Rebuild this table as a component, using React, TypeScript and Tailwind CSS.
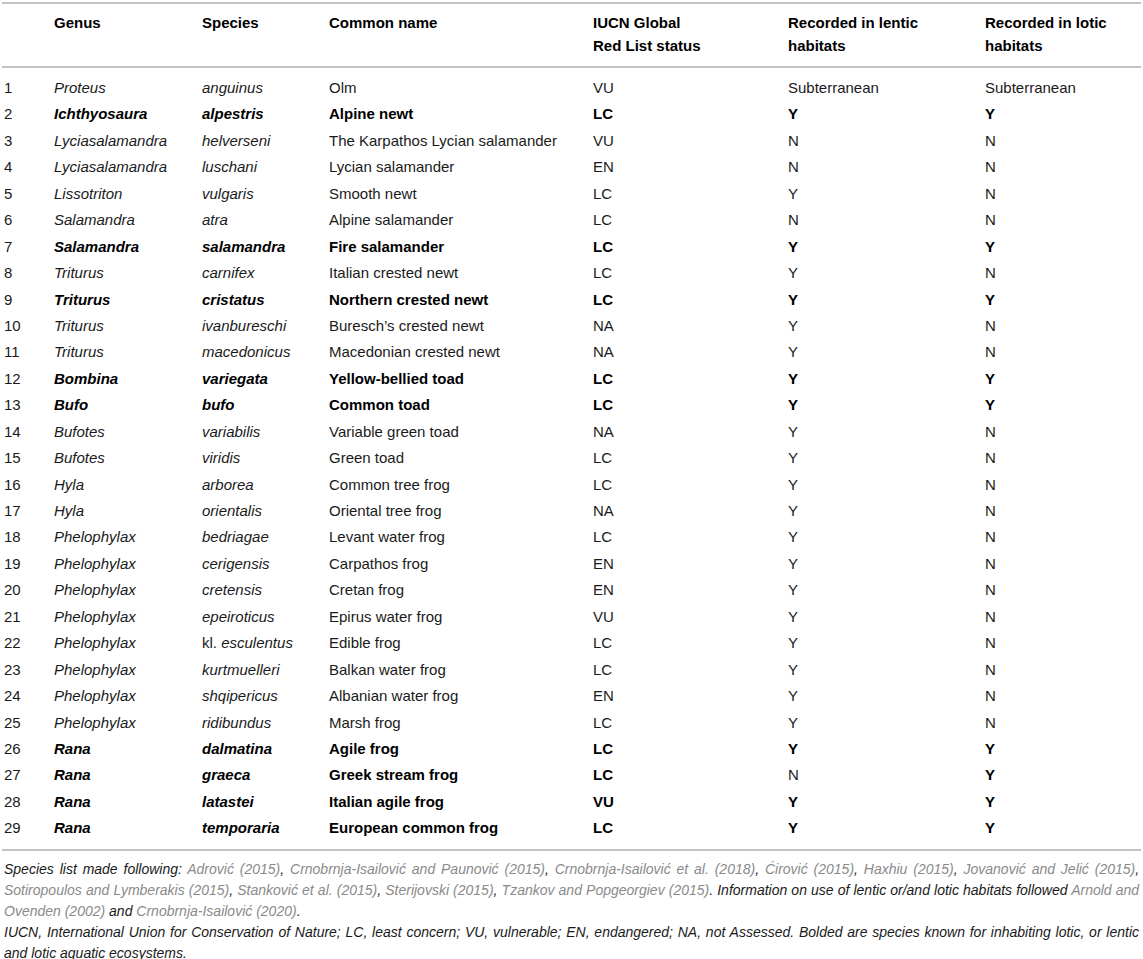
import React from "react";

type Row = [string, string, string, string, string, string, boolean, boolean?, boolean?];

const rows: Row[] = [
  ["Proteus", "anguinus", "Olm", "VU", "Subterranean", "Subterranean", false],
  ["Ichthyosaura", "alpestris", "Alpine newt", "LC", "Y", "Y", true],
  ["Lyciasalamandra", "helverseni", "The Karpathos Lycian salamander", "VU", "N", "N", false],
  ["Lyciasalamandra", "luschani", "Lycian salamander", "EN", "N", "N", false],
  ["Lissotriton", "vulgaris", "Smooth newt", "LC", "Y", "N", false],
  ["Salamandra", "atra", "Alpine salamander", "LC", "N", "N", false],
  ["Salamandra", "salamandra", "Fire salamander", "LC", "Y", "Y", true],
  ["Triturus", "carnifex", "Italian crested newt", "LC", "Y", "N", false],
  ["Triturus", "cristatus", "Northern crested newt", "LC", "Y", "Y", true],
  ["Triturus", "ivanbureschi", "Buresch\u2019s crested newt", "NA", "Y", "N", false],
  ["Triturus", "macedonicus", "Macedonian crested newt", "NA", "Y", "N", false],
  ["Bombina", "variegata", "Yellow-bellied toad", "LC", "Y", "Y", true],
  ["Bufo", "bufo", "Common toad", "LC", "Y", "Y", true],
  ["Bufotes", "variabilis", "Variable green toad", "NA", "Y", "N", false],
  ["Bufotes", "viridis", "Green toad", "LC", "Y", "N", false],
  ["Hyla", "arborea", "Common tree frog", "LC", "Y", "N", false],
  ["Hyla", "orientalis", "Oriental tree frog", "NA", "Y", "N", false],
  ["Phelophylax", "bedriagae", "Levant water frog", "LC", "Y", "N", false],
  ["Phelophylax", "cerigensis", "Carpathos frog", "EN", "Y", "N", false],
  ["Phelophylax", "cretensis", "Cretan frog", "EN", "Y", "N", false],
  ["Phelophylax", "epeiroticus", "Epirus water frog", "VU", "Y", "N", false],
  ["Phelophylax", "kl. esculentus", "Edible frog", "LC", "Y", "N", false],
  ["Phelophylax", "kurtmuelleri", "Balkan water frog", "LC", "Y", "N", false],
  ["Phelophylax", "shqipericus", "Albanian water frog", "EN", "Y", "N", false],
  ["Phelophylax", "ridibundus", "Marsh frog", "LC", "Y", "N", false],
  ["Rana", "dalmatina", "Agile frog", "LC", "Y", "Y", true],
  ["Rana", "graeca", "Greek stream frog", "LC", "N", "Y", true, false, true],
  ["Rana", "latastei", "Italian agile frog", "VU", "Y", "Y", true],
  ["Rana", "temporaria", "European common frog", "LC", "Y", "Y", true],
];

const grid = "grid grid-cols-[50px_148px_127px_264px_195px_197px_1fr]";

function Species({ text }: { text: string }) {
  if (text.startsWith("kl. ")) {
    return (
      <>
        <span className="not-italic">kl.</span> <span>{text.slice(4)}</span>
      </>
    );
  }
  return <>{text}</>;
}

function Cite({ children }: { children: React.ReactNode }) {
  return <span className="text-[#8a8a8a]">{children}</span>;
}

export default function App() {
  return (
    <div
      className="w-[1143px] h-[959px] bg-white overflow-hidden"
      style={{ fontFamily: '"Liberation Sans", Arial, sans-serif' }}
    >
      <div className="mx-[2px] pt-[2px]">
        <div className="h-[2px] bg-[#c2c2c2]" />
        <div className={`${grid} text-[15px] leading-[23px] font-bold text-black pt-[7px] pb-[9px]`}>
          <div className="pl-[2px]"></div>
          <div className="pl-[2px]">Genus</div>
          <div className="pl-[2px]">Species</div>
          <div className="pl-[2px]">Common name</div>
          <div className="pl-[2px]">
            IUCN Global
            <br />
            Red List status
          </div>
          <div className="pl-[2px]">
            Recorded in lentic
            <br />
            habitats
          </div>
          <div className="pl-[2px]">
            Recorded in lotic
            <br />
            habitats
          </div>
        </div>
        <div className="h-[2px] bg-[#c2c2c2]" />
        <div className="pt-[7px] pb-[7px] text-[15px] leading-[26.43px] text-[#1a1a1a]">
          {rows.map((r, i) => {
            const b = r[6];
            const lentB = r[7] === undefined ? b : r[7];
            const lotB = r[8] === undefined ? b : r[8];
            const bc = b ? "font-bold text-black" : "";
            return (
              <div key={i} className={grid}>
                <div className="pl-[2px]">{i + 1}</div>
                <div className={`pl-[2px] italic ${bc}`}>{r[0]}</div>
                <div className={`pl-[2px] italic ${bc}`}>
                  <Species text={r[1]} />
                </div>
                <div className={`pl-[2px] ${bc}`}>{r[2]}</div>
                <div className={`pl-[2px] ${bc}`}>{r[3]}</div>
                <div className={`pl-[2px] ${lentB ? "font-bold text-black" : ""}`}>{r[4]}</div>
                <div className={`pl-[2px] ${lotB ? "font-bold text-black" : ""}`}>{r[5]}</div>
              </div>
            );
          })}
        </div>
        <div className="h-[2px] bg-[#c2c2c2]" />
        <div className="pt-[8px] px-[2px] italic text-[14px] leading-[21px] text-[#1a1a1a]">
          <div className="text-justify [text-align-last:justify]">
            Species list made following: <Cite>Adrović (2015)</Cite>, <Cite>Crnobrnja-Isailović and Paunović (2015)</Cite>,{" "}
            <Cite>Crnobrnja-Isailović et al. (2018)</Cite>, <Cite>Ćirović (2015)</Cite>, <Cite>Haxhiu (2015)</Cite>,{" "}
            <Cite>Jovanović and Jelić (2015)</Cite>,
          </div>
          <div className="text-justify [text-align-last:justify]">
            <Cite>Sotiropoulos and Lymberakis (2015)</Cite>, <Cite>Stanković et al. (2015)</Cite>,{" "}
            <Cite>Sterijovski (2015)</Cite>, <Cite>Tzankov and Popgeorgiev (2015)</Cite>. Information on use of lentic
            or/and lotic habitats followed <Cite>Arnold and</Cite>
          </div>
          <div>
            <Cite>Ovenden (2002)</Cite> and <Cite>Crnobrnja-Isailović (2020)</Cite>.
          </div>
          <div className="text-justify [text-align-last:justify]">
            IUCN, International Union for Conservation of Nature; LC, least concern; VU, vulnerable; EN, endangered; NA,
            not Assessed. Bolded are species known for inhabiting lotic, or lentic
          </div>
          <div>and lotic aquatic ecosystems.</div>
        </div>
      </div>
    </div>
  );
}
